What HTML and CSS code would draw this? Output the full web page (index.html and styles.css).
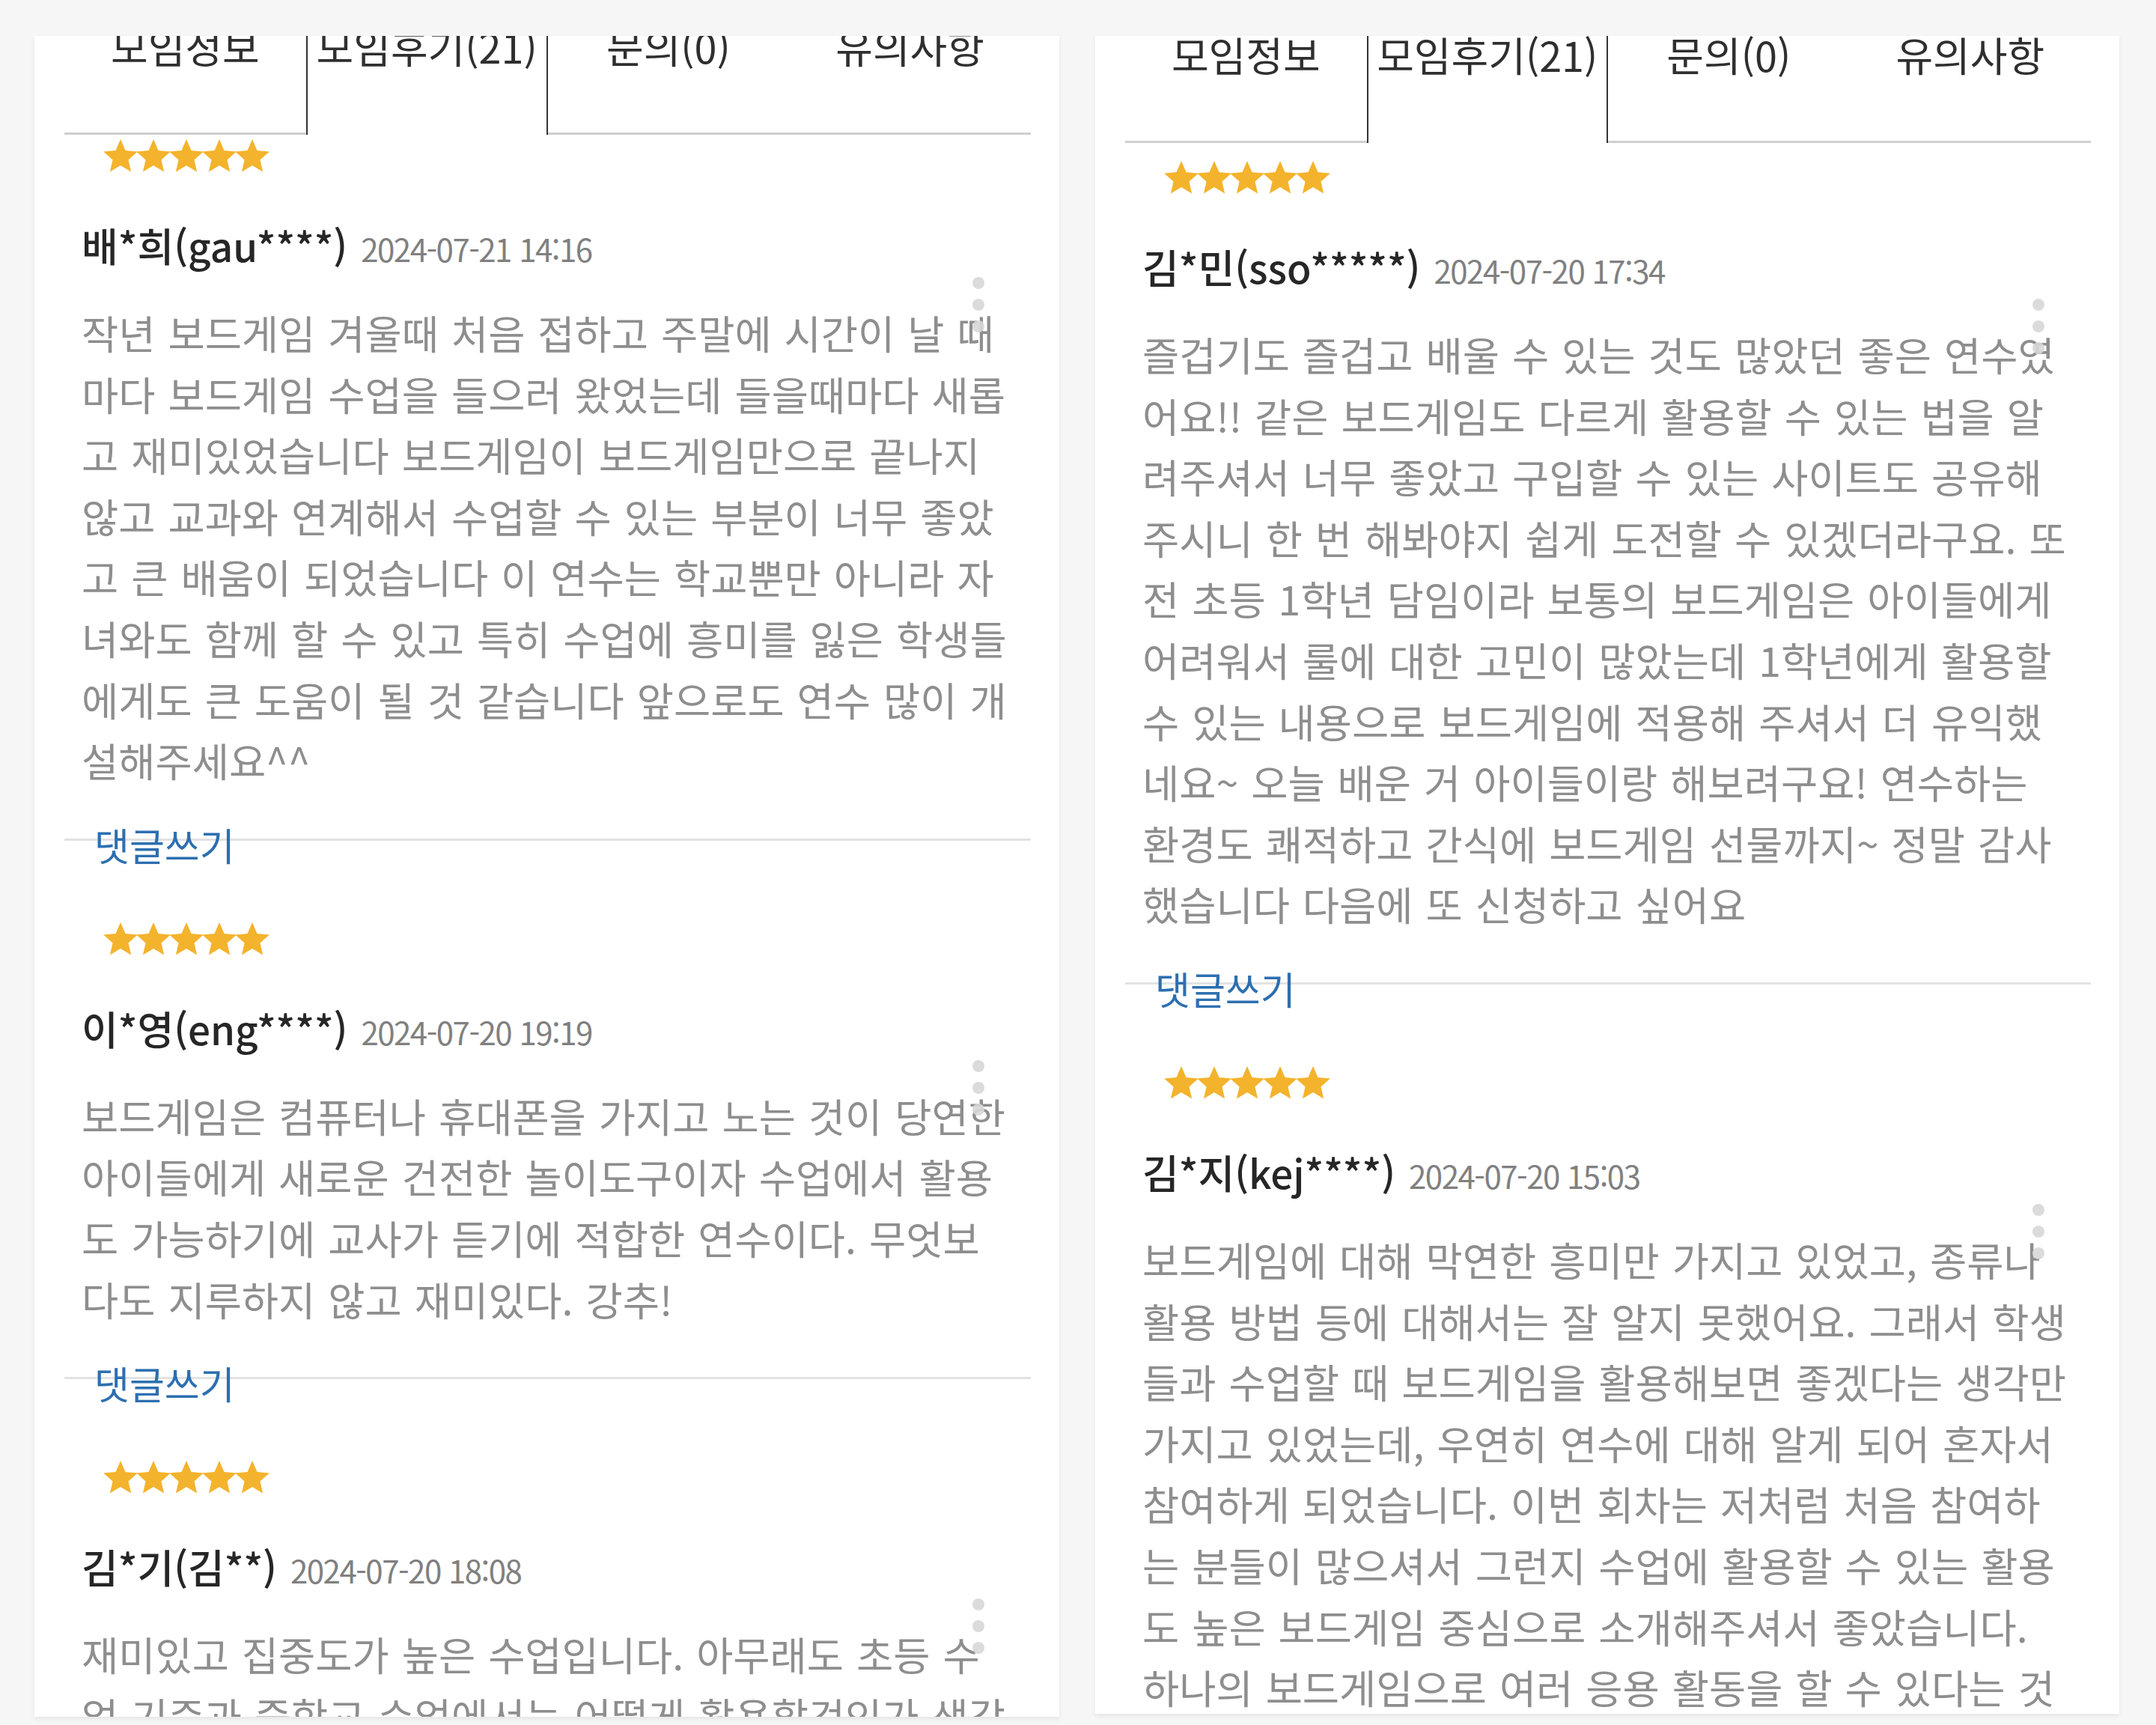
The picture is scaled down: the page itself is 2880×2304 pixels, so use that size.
FILE: index.html
```html
<!DOCTYPE html>
<html lang="ko">
<head>
<meta charset="utf-8">
<title>모임후기</title>
<link rel="stylesheet" href="styles.css">
</head>
<body>
<svg class="sprite" aria-hidden="true">
  <defs>
    <symbol id="star" viewBox="-24 -24 48 48">
      <path d="M0-24L6.47-8.9 22.83-7.42 10.46 3.4 14.11 19.42 0 11-14.11 19.42-10.46 3.4-22.83-7.42-6.47-8.9Z"/>
    </symbol>
  </defs>
</svg>
<main class="screen">
  <section class="panel panel--left">
    <nav class="tabs">
      <div class="tab">모임정보</div>
      <div class="tab tab--active">모임후기(21)</div>
      <div class="tab">문의(0)</div>
      <div class="tab">유의사항</div>
    </nav>

    <article class="review review--first">
      <svg class="stars" viewBox="0 0 222 48"><use href="#star" x="-1" y="0" width="48" height="48"/><use href="#star" x="43" y="0" width="48" height="48"/><use href="#star" x="87" y="0" width="48" height="48"/><use href="#star" x="131" y="0" width="48" height="48"/><use href="#star" x="175" y="0" width="48" height="48"/></svg>
      <div class="meta"><span class="name">배*희(gau****)</span><span class="date">2024-07-21 14:16</span></div>
      <p class="text">작년 보드게임 겨울때 처음 접하고 주말에 시간이 날 때<br>마다 보드게임 수업을 들으러 왔었는데 들을때마다 새롭<br>고 재미있었습니다 보드게임이 보드게임만으로 끝나지<br>않고 교과와 연계해서 수업할 수 있는 부분이 너무 좋았<br>고 큰 배움이 되었습니다 이 연수는 학교뿐만 아니라 자<br>녀와도 함께 할 수 있고 특히 수업에 흥미를 잃은 학생들<br>에게도 큰 도움이 될 것 같습니다 앞으로도 연수 많이 개<br>설해주세요^^</p>
      <span class="kebab"><i></i><i></i><i></i></span>
      <div class="reply"><a class="reply__link" href="#">댓글쓰기</a></div>
    </article>

    <article class="review">
      <svg class="stars" viewBox="0 0 222 48"><use href="#star" x="-1" y="0" width="48" height="48"/><use href="#star" x="43" y="0" width="48" height="48"/><use href="#star" x="87" y="0" width="48" height="48"/><use href="#star" x="131" y="0" width="48" height="48"/><use href="#star" x="175" y="0" width="48" height="48"/></svg>
      <div class="meta"><span class="name">이*영(eng****)</span><span class="date">2024-07-20 19:19</span></div>
      <p class="text">보드게임은 컴퓨터나 휴대폰을 가지고 노는 것이 당연한<br>아이들에게 새로운 건전한 놀이도구이자 수업에서 활용<br>도 가능하기에 교사가 듣기에 적합한 연수이다. 무엇보<br>다도 지루하지 않고 재미있다. 강추!</p>
      <span class="kebab"><i></i><i></i><i></i></span>
      <div class="reply"><a class="reply__link" href="#">댓글쓰기</a></div>
    </article>

    <article class="review">
      <svg class="stars" viewBox="0 0 222 48"><use href="#star" x="-1" y="0" width="48" height="48"/><use href="#star" x="43" y="0" width="48" height="48"/><use href="#star" x="87" y="0" width="48" height="48"/><use href="#star" x="131" y="0" width="48" height="48"/><use href="#star" x="175" y="0" width="48" height="48"/></svg>
      <div class="meta"><span class="name">김*기(김**)</span><span class="date">2024-07-20 18:08</span></div>
      <p class="text">재미있고 집중도가 높은 수업입니다. 아무래도 초등 수<br>업 기준과 중학교 수업에서는 어떻게 활용할것인가 생각</p>
      <span class="kebab"><i></i><i></i><i></i></span>
    </article>
  </section>

  <section class="panel panel--right">
    <nav class="tabs">
      <div class="tab">모임정보</div>
      <div class="tab tab--active">모임후기(21)</div>
      <div class="tab">문의(0)</div>
      <div class="tab">유의사항</div>
    </nav>

    <article class="review review--first">
      <svg class="stars" viewBox="0 0 222 48"><use href="#star" x="-1" y="0" width="48" height="48"/><use href="#star" x="43" y="0" width="48" height="48"/><use href="#star" x="87" y="0" width="48" height="48"/><use href="#star" x="131" y="0" width="48" height="48"/><use href="#star" x="175" y="0" width="48" height="48"/></svg>
      <div class="meta"><span class="name">김*민(sso*****)</span><span class="date">2024-07-20 17:34</span></div>
      <p class="text">즐겁기도 즐겁고 배울 수 있는 것도 많았던 좋은 연수였<br>어요!! 같은 보드게임도 다르게 활용할 수 있는 법을 알<br>려주셔서 너무 좋았고 구입할 수 있는 사이트도 공유해<br>주시니 한 번 해봐야지 쉽게 도전할 수 있겠더라구요. 또<br>전 초등 1학년 담임이라 보통의 보드게임은 아이들에게<br>어려워서 룰에 대한 고민이 많았는데 1학년에게 활용할<br>수 있는 내용으로 보드게임에 적용해 주셔서 더 유익했<br>네요~ 오늘 배운 거 아이들이랑 해보려구요! 연수하는<br>환경도 쾌적하고 간식에 보드게임 선물까지~ 정말 감사<br>했습니다 다음에 또 신청하고 싶어요</p>
      <span class="kebab"><i></i><i></i><i></i></span>
      <div class="reply"><a class="reply__link" href="#">댓글쓰기</a></div>
    </article>

    <article class="review">
      <svg class="stars" viewBox="0 0 222 48"><use href="#star" x="-1" y="0" width="48" height="48"/><use href="#star" x="43" y="0" width="48" height="48"/><use href="#star" x="87" y="0" width="48" height="48"/><use href="#star" x="131" y="0" width="48" height="48"/><use href="#star" x="175" y="0" width="48" height="48"/></svg>
      <div class="meta"><span class="name">김*지(kej****)</span><span class="date">2024-07-20 15:03</span></div>
      <p class="text">보드게임에 대해 막연한 흥미만 가지고 있었고, 종류나<br>활용 방법 등에 대해서는 잘 알지 못했어요. 그래서 학생<br>들과 수업할 때 보드게임을 활용해보면 좋겠다는 생각만<br>가지고 있었는데, 우연히 연수에 대해 알게 되어 혼자서<br>참여하게 되었습니다. 이번 회차는 저처럼 처음 참여하<br>는 분들이 많으셔서 그런지 수업에 활용할 수 있는 활용<br>도 높은 보드게임 중심으로 소개해주셔서 좋았습니다.<br>하나의 보드게임으로 여러 응용 활동을 할 수 있다는 것</p>
      <span class="kebab"><i></i><i></i><i></i></span>
    </article>
  </section>
</main>
</body>
</html>
```

FILE: styles.css
```css
* {
  box-sizing: border-box;
  margin: 0;
  padding: 0;
}

html, body {
  width: 2880px;
  height: 2304px;
  overflow: hidden;
}

body {
  background: #f6f6f6;
  font-family: "Noto Sans CJK KR", "Noto Sans", sans-serif;
}

.sprite {
  display: block;
  width: 0;
  height: 0;
  overflow: hidden;
}

.screen {
  display: flex;
  gap: 48px;
  padding: 48px 0 0 46px;
}

.panel {
  position: relative;
  width: 1369px;
  height: 2245px;
  overflow: hidden;
  padding: 0 38px 0 40px;
  background: #fff;
  box-shadow: 0 3px 6px rgba(0, 0, 0, 0.07);
}

.panel--right {
  width: 1368px;
  height: 2241px;
}

.tabs {
  display: grid;
  grid-template-columns: repeat(4, 1fr);
  height: 143px;
}

.panel--left .tabs {
  margin-top: -11px;
}

.tab {
  border-bottom: 3px solid #cfcfcf;
  text-align: center;
  font-size: 54px;
  line-height: 50px;
  color: #2f2f2f;
  white-space: nowrap;
}

.tab--active {
  border-bottom: 0;
  border-left: 2px solid #333;
  border-right: 2px solid #333;
}

.review {
  position: relative;
  margin-top: 79px;
}

.review--first {
  margin-top: 26px;
}

.panel--left .review--first {
  margin-top: 8px;
}

.stars {
  display: block;
  width: 222px;
  height: 48px;
  margin-left: 52px;
  margin-top: -2px;
  margin-bottom: -2px;
  fill: #f4b32c;
}

.meta {
  display: flex;
  align-items: baseline;
  gap: 18px;
  margin-top: 60px;
  padding-left: 23px;
  line-height: 70px;
}

.name {
  font-size: 53px;
  font-weight: 500;
  color: #262626;
}

.date {
  font-size: 42px;
  color: #808080;
  letter-spacing: -1.5px;
}

.text {
  margin-top: 36px;
  padding-left: 23px;
  font-size: 53.5px;
  line-height: 81.6px;
  color: #8e8e8e;
  white-space: nowrap;
  word-spacing: 2px;
}

.kebab {
  position: absolute;
  top: 184px;
  right: 62px;
  display: flex;
  flex-direction: column;
  gap: 13px;
}

.kebab i {
  display: block;
  width: 16px;
  height: 16px;
  border-radius: 50%;
  background: rgba(215, 215, 215, 0.9);
}

.reply {
  margin-top: 64px;
  border-top: 3px solid #e2e2e2;
}

.reply__link {
  display: block;
  margin-top: -22px;
  padding-left: 40px;
  font-size: 51px;
  line-height: 54px;
  color: #2d6fb0;
  text-decoration: none;
}
```
